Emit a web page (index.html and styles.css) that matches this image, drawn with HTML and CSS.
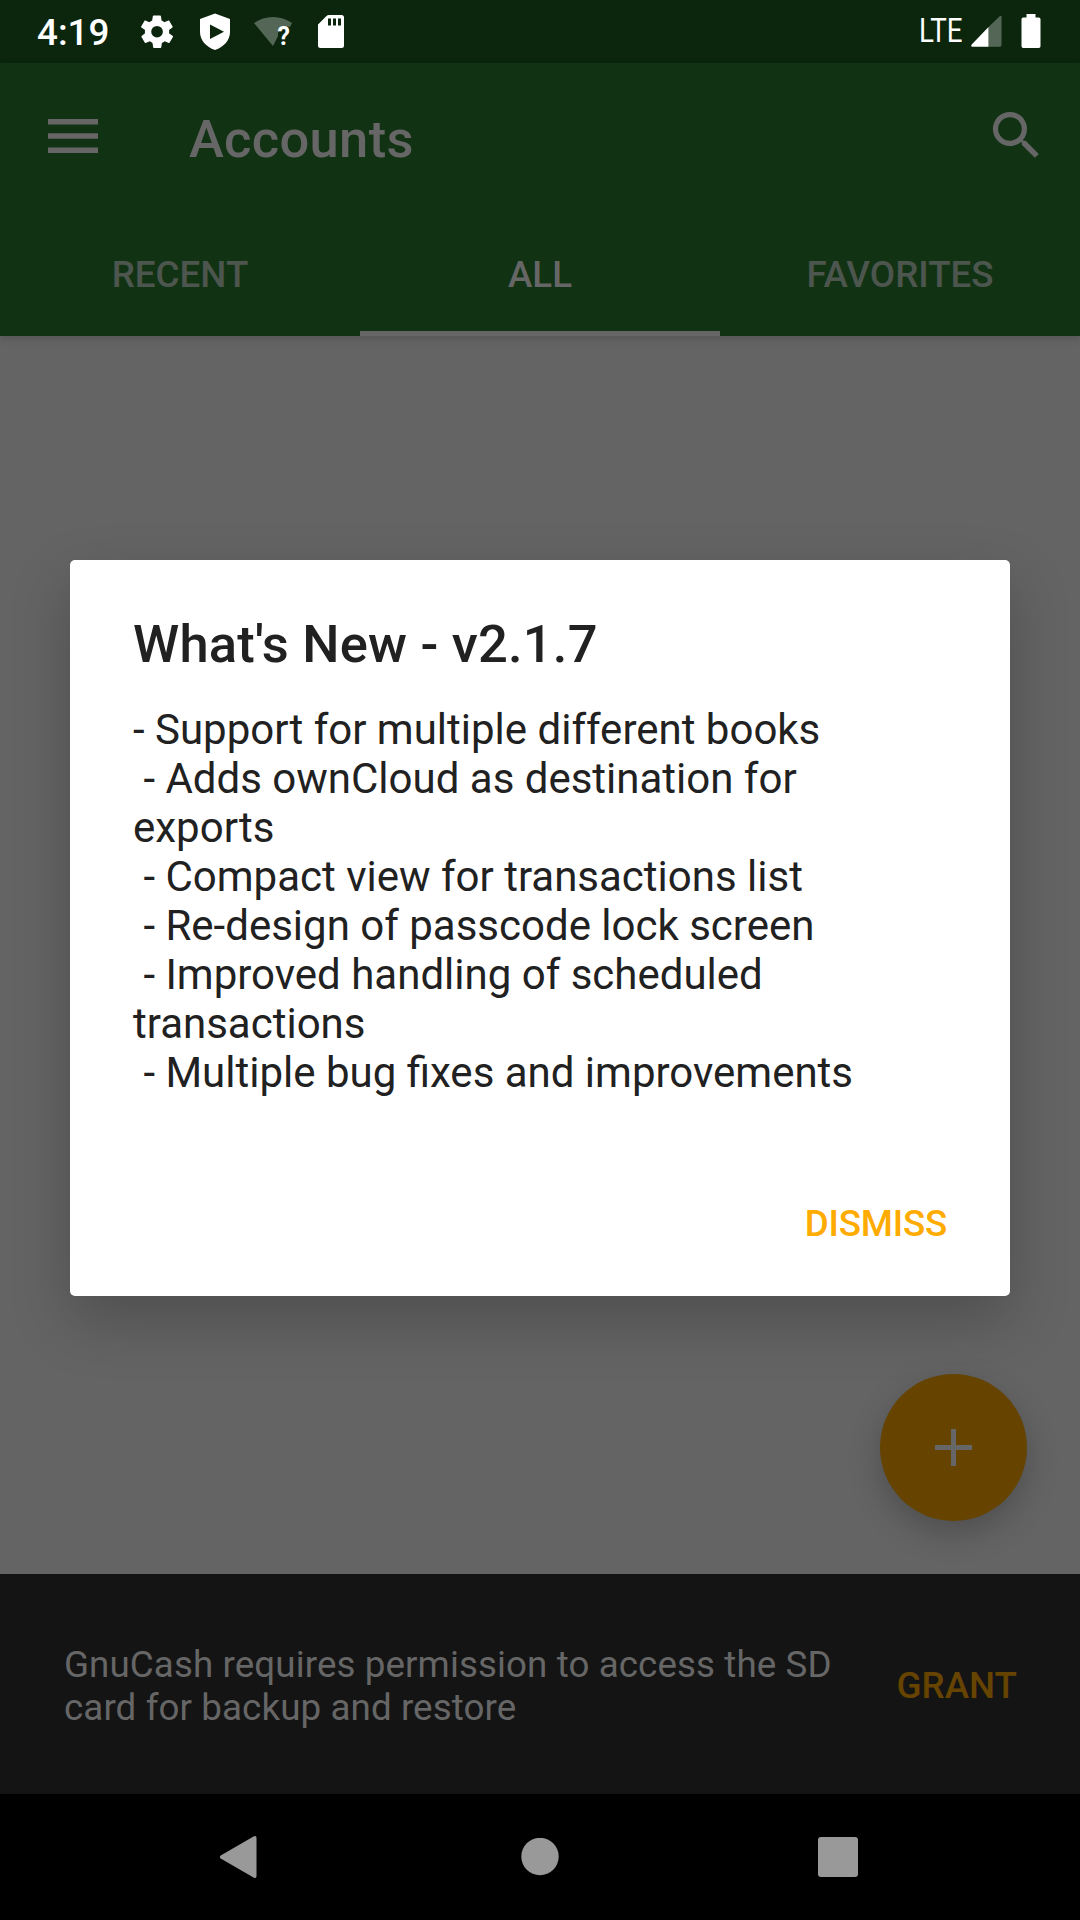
FILE: index.html
```html
<!DOCTYPE html>
<html lang="en">
<head>
<meta charset="utf-8">
<title>Accounts</title>
<link rel="stylesheet" href="styles.css">
</head>
<body>
<div class="screen">
  <header class="status-bar">
    <span class="clock">4:19</span>
    <svg class="status-icons" width="210" height="63" viewBox="0 0 210 63" fill="#fff">
      <path transform="translate(-2.4 12.3) scale(1.62)" d="M19.4 13c0-.3.1-.6.1-1s0-.7-.1-1l2.100-1.600c.2-.2.2-.4.1-.6l-2-3.500c-.1-.2-.4-.3-.6-.2l-2.500 1c-.5-.4-1.100-.7-1.700-1l-.4-2.600c0-.3-.2-.5-.5-.5h-4c-.3 0-.5.2-.5.400l-.4 2.700c-.6.200-1.100.6-1.700 1l-2.500-1c-.2-.1-.5 0-.6.200l-2 3.500c-.1.200-.1.500.1.600L4.600 11c0 .3-.1.700-.1 1s0 .700.1 1l-2.100 1.600c-.2.200-.2.400-.1.600l2 3.500c.1.200.4.300.6.200l2.500-1c.5.400 1.100.700 1.700 1l.4 2.600c0 .300.2.500.5.500h4c.3 0 .5-.2.5-.400l.4-2.700c.6-.200 1.200-.6 1.700-1l2.500 1c.2.100.5 0 .6-.2l2-3.500c.1-.2.1-.5-.1-.6zM12 15.600a3.600 3.600 0 1 1 0-7.200 3.600 3.600 0 0 1 0 7.200z"/>
      <path fill-rule="evenodd" d="M75 13.500 90 19v13c0 8-6 15-15 18-9-3-15-10-15-18V19zM70 24.500v14.500l14-7.200z"/>
      <path opacity=".3" d="M114 23c11-8 27-8 38 0l-2 4c-5-2-13 2-12 9l-5 10z"/>
      <path fill-rule="evenodd" d="m178 24.500 8.500-8.500q1-1 2.500-1h12.500q2.500 0 2.500 2.500v28q0 2.500-2.500 2.500h-21q-2.500 0-2.500-2.500zm10-6v7h3v-7zm5 0v7h3v-7zm5 0v7h3v-7z"/>
      <text class="wifi-mark" x="137.500" y="45">?</text>
    </svg>
    <span class="network">LTE</span>
    <svg class="status-right" width="72" height="63" viewBox="0 0 72 63" fill="#fff">
      <path opacity=".3" d="M18.500 27 30 16q1.500-.8 1.500.500v28.500q0 1.800-1.500 1.800H18.500z"/>
      <path d="M18.500 27v19.800H2q-1.500-.5-.5-2z"/>
      <path d="M56.500 14h9v3.500h3.300q1.700 0 1.700 1.700v27q0 1.700-1.700 1.700H53.200q-1.700 0-1.700-1.700v-27q0-1.700 1.700-1.700h3.300z"/>
    </svg>
  </header>

  <div class="app-bar">
    <div class="toolbar">
      <svg class="menu" width="50" height="34" viewBox="0 0 50 34"><path d="M0 0h50v5.500H0zm0 14.200h50v5.500H0zm0 14.200h50V34H0z"/></svg>
      <h1 class="toolbar-title">Accounts</h1>
      <svg class="search" width="63" height="63" viewBox="0 0 24 24"><path d="M15.500 14h-.79l-.28-.27A6.471 6.471 0 0 0 16 9.500 6.500 6.500 0 1 0 9.500 16c1.610 0 3.090-.59 4.230-1.570l.27.280v.79l5 4.990L20.490 19zm-6 0C7.010 14 5 11.990 5 9.500S7.010 5 9.500 5 14 7.010 14 9.500 11.990 14 9.500 14z"/></svg>
    </div>
    <nav class="tabs">
      <span class="tab">RECENT</span>
      <span class="tab tab-active">ALL</span>
      <span class="tab">FAVORITES</span>
    </nav>
  </div>

  <main class="content">
    <button class="fab" aria-label="Add account">
      <svg width="37" height="37" viewBox="0 0 37 37"><path d="M16 0h5v16h16v5H21v16h-5V21H0v-5h16z"/></svg>
    </button>
  </main>

  <div class="snackbar">
    <p class="snackbar-text">GnuCash requires permission to access the SD<br>card for backup and restore</p>
    <span class="snackbar-action">GRANT</span>
  </div>

  <footer class="nav-bar">
    <svg width="42" height="44" viewBox="0 0 42 44"><path d="M34.500 1.500q3-1.500 3 1.500v38q0 3-3 1.500L1.700 23.500q-1.700-1.500 0-3z"/></svg>
    <svg width="38" height="38" viewBox="0 0 38 38"><circle cx="19" cy="18.500" r="18.700"/></svg>
    <svg width="40" height="40" viewBox="0 0 40 40"><rect width="40" height="40" rx="3"/></svg>
  </footer>

  <section class="dialog" role="dialog">
    <h2 class="dialog-title">What's New - v2.1.7</h2>
    <p class="dialog-body">- Support for multiple different books
 - Adds ownCloud as destination for
exports
 - Compact view for transactions list
 - Re-design of passcode lock screen
 - Improved handling of scheduled
transactions
 - Multiple bug fixes and improvements</p>
    <span class="dialog-action">DISMISS</span>
  </section>
</div>
</body>
</html>
```

FILE: styles.css
```css
* { box-sizing: border-box; }
body, h1, h2, p { margin: 0; }
body { font-family: Roboto, "Noto Sans", sans-serif; background: #646464; }
svg { display: block; flex: none; }

.screen {
  position: relative;
  width: 1080px;
  height: 1920px;
  overflow: hidden;
  display: flex;
  flex-direction: column;
  background: #646464;
}

.status-bar {
  height: 63px;
  flex: none;
  display: flex;
  align-items: center;
  padding: 0 38px 0 37px;
  background: #0b260d;
  color: #fff;
}
.clock {
  width: 103px;
  padding-top: 2px;
  font-size: 36.75px;
  line-height: 43px;
  font-weight: 500;
}
.wifi-mark { font-size: 25px; font-weight: 700; }
.network {
  margin-left: auto;
  width: 51px;
  height: 40px;
  font-size: 33px;
  line-height: 38px;
  transform: scaleX(.84);
  transform-origin: left;
}

.app-bar {
  position: relative;
  z-index: 1;
  flex: none;
  background: #123214;
  box-shadow: 0 3px 8px rgba(0, 0, 0, .14);
}
.toolbar {
  height: 147px;
  display: flex;
  align-items: center;
  padding: 0 32px 2px 48px;
}
.menu, .search { fill: #666; }
.toolbar-title {
  margin-left: 91px;
  padding-top: 6px;
  font-size: 52.5px;
  line-height: 62px;
  font-weight: 500;
  letter-spacing: .3px;
  color: #666;
}
.search { margin-left: auto; }
.tabs { display: grid; grid-template-columns: repeat(3, 1fr); height: 126px; }
.tab {
  padding-top: 43px;
  text-align: center;
  font-size: 36.75px;
  line-height: 43px;
  font-weight: 500;
  color: #4d564e;
}
.tab-active { color: #666; border-bottom: 5px solid #666; }

.content {
  flex: 1;
  display: flex;
  align-items: flex-end;
  justify-content: flex-end;
  padding: 0 53px 53px;
}
.fab {
  width: 147px;
  height: 147px;
  padding: 0;
  border: 0;
  border-radius: 50%;
  display: grid;
  place-items: center;
  background: #640;
  box-shadow: 0 12px 32px rgba(0, 0, 0, .22);
}
.fab svg { fill: #666; }

.snackbar {
  position: relative;
  height: 220px;
  flex: none;
  display: flex;
  align-items: center;
  justify-content: space-between;
  padding: 3px 63px 0 64px;
  background: #141414;
  font-size: 36.75px;
  line-height: 43px;
}
.snackbar-text { color: #666; white-space: nowrap; letter-spacing: .09px; }
.snackbar-action { color: #640; font-weight: 500; }

.nav-bar {
  height: 126px;
  flex: none;
  display: flex;
  align-items: center;
  justify-content: space-between;
  padding: 0 222px 0 219px;
  background: #000;
}
.nav-bar svg { fill: #999; }

.dialog {
  position: absolute;
  z-index: 2;
  left: 70px;
  top: 560px;
  width: 940px;
  height: 736px;
  padding: 53px 63px 0;
  display: flex;
  flex-direction: column;
  background: #fff;
  border-radius: 5px;
  color: #212121;
  box-shadow: 0 24px 60px rgba(0, 0, 0, .22);
}
.dialog-title {
  font-size: 52.5px;
  line-height: 62px;
  font-weight: 500;
  letter-spacing: .2px;
}
.dialog-body {
  margin-top: 30px;
  font-size: 42px;
  line-height: 49px;
  white-space: pre;
}
.dialog-action {
  margin-top: 105px;
  align-self: flex-end;
  font-size: 36.75px;
  line-height: 43px;
  font-weight: 500;
  letter-spacing: -.2px;
  color: #ffab00;
}
```
